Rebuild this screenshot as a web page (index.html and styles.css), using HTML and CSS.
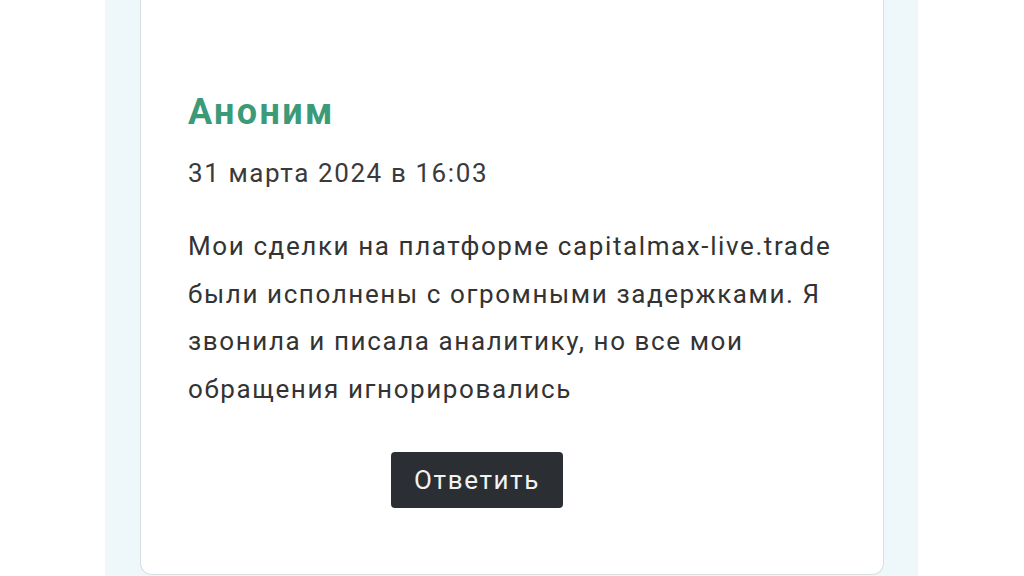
FILE: index.html
```html
<!DOCTYPE html>
<html lang="ru">
<head>
<meta charset="utf-8">
<link rel="stylesheet" href="styles.css">
</head>
<body>
<div class="panel">
  <div class="card">
    <div class="name">Аноним</div>
    <div class="date">31 марта 2024 в 16:03</div>
    <p class="text">Мои сделки на платформе capitalmax-live.trade были исполнены с огромными задержками. Я звонила и писала аналитику, но все мои обращения игнорировались</p>
    <div class="actions"><button class="reply">Ответить</button></div>
  </div>
</div>
</body>
</html>
```
FILE: styles.css
```css
html, body {
  margin: 0;
  padding: 0;
  background: #ffffff;
  height: 576px;
  overflow: hidden;
  font-family: Roboto, "Liberation Sans", sans-serif;
}
.panel {
  margin-left: 105px;
  width: 813px;
  height: 576px;
  background: #eef7fa;
  padding-left: 35px;
  box-sizing: border-box;
}
.card {
  width: 744px;
  height: 575px;
  box-sizing: border-box;
  background: #ffffff;
  border: 1px solid #d9dee1;
  border-top: none;
  border-radius: 0 0 12px 12px;
  padding: 90px 47px 0 47px;
}
.name {
  font-size: 36px;
  font-weight: 700;
  color: #3b9a78;
  line-height: 44px;
  letter-spacing: 2.4px;
}
.date {
  margin-top: 22px;
  font-size: 26px;
  color: #3a3a3a;
  line-height: 34px;
  letter-spacing: 1.6px;
}
.text {
  margin: 33px 0 0 0;
  font-size: 26px;
  line-height: 47.5px;
  color: #333333;
  width: 670px;
  letter-spacing: 1.6px;
}
.actions {
  margin-top: 39px;
  padding-left: 203px;
}
.reply {
  width: 172px;
  height: 56px;
  border: none;
  border-radius: 4px;
  background: #2b2f33;
  color: #f2f2f2;
  font-family: Roboto, "Liberation Sans", sans-serif;
  font-size: 26px;
  letter-spacing: 1.6px;
  padding: 0;
}
```
